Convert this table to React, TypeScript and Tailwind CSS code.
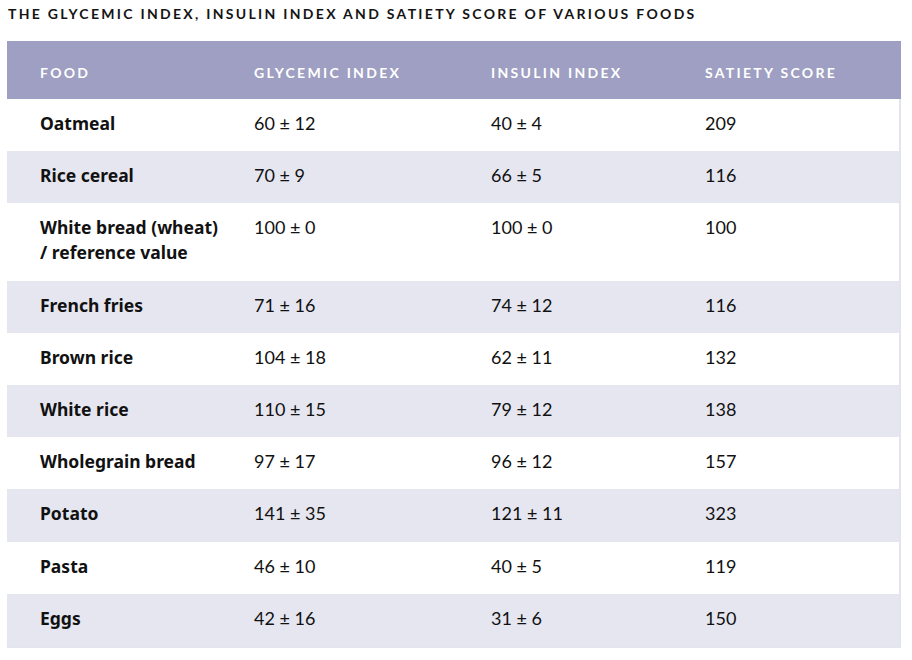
const rows: { food: string[]; gi: string; ii: string; sat: string }[] = [
  { food: ["Oatmeal"], gi: "60 ± 12", ii: "40 ± 4", sat: "209" },
  { food: ["Rice cereal"], gi: "70 ± 9", ii: "66 ± 5", sat: "116" },
  { food: ["White bread (wheat)", "/ reference value"], gi: "100 ± 0", ii: "100 ± 0", sat: "100" },
  { food: ["French fries"], gi: "71 ± 16", ii: "74 ± 12", sat: "116" },
  { food: ["Brown rice"], gi: "104 ± 18", ii: "62 ± 11", sat: "132" },
  { food: ["White rice"], gi: "110 ± 15", ii: "79 ± 12", sat: "138" },
  { food: ["Wholegrain bread"], gi: "97 ± 17", ii: "96 ± 12", sat: "157" },
  { food: ["Potato"], gi: "141 ± 35", ii: "121 ± 11", sat: "323" },
  { food: ["Pasta"], gi: "46 ± 10", ii: "40 ± 5", sat: "119" },
  { food: ["Eggs"], gi: "42 ± 16", ii: "31 ± 6", sat: "150" },
];

const cols = "grid grid-cols-[214px_237px_214px_1fr]";

export default function App() {
  return (
    <div className="min-h-[660px] bg-white pt-[5px] pl-[7px] pr-[11px] font-['Lato','Noto_Sans',sans-serif] text-[#111]">
      <h1 className="pl-px text-[14px] leading-[17px] font-bold tracking-[2.3px] text-[#141414]">
        THE GLYCEMIC INDEX, INSULIN INDEX AND SATIETY SCORE OF VARIOUS FOODS
      </h1>
      <div className="mt-[19px] border-x-2 border-b-2 border-[#e4e4ef]">
        <div className={`${cols} -mx-[2px] bg-[#9e9fc2] pt-[23px] pb-[17px] text-[14px] leading-[18px] font-bold tracking-[2.3px] text-white`}>
          <div className="pl-[33px]">FOOD</div>
          <div className="pl-[33px]">GLYCEMIC INDEX</div>
          <div className="pl-[33px]">INSULIN INDEX</div>
          <div className="pl-[33px]">SATIETY SCORE</div>
        </div>
        {rows.map((r, i) => (
          <div
            key={r.food[0]}
            className={`${cols} -ml-[2px] pt-[12px] pb-[15.2px] text-[18px] leading-[25px] ${i % 2 ? "bg-[#e6e6f0]" : "bg-white"}`}
          >
            <div className="pl-[33px] font-['Noto_Sans',sans-serif] text-[17.5px] font-bold">
              {r.food.map((l) => (
                <div key={l}>{l}</div>
              ))}
            </div>
            <div className="pl-[33px]">{r.gi}</div>
            <div className="pl-[33px]">{r.ii}</div>
            <div className="pl-[33px]">{r.sat}</div>
          </div>
        ))}
      </div>
    </div>
  );
}
